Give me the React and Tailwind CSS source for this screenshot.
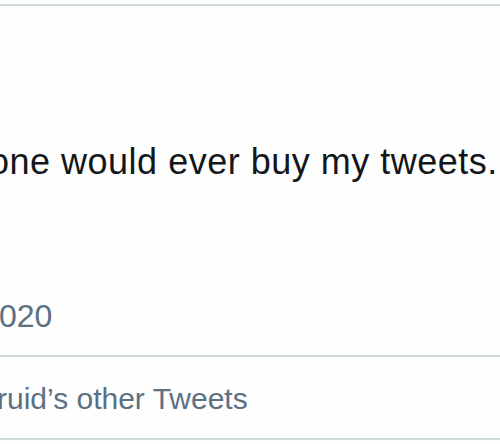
export default function App() {
  return (
    <div className="w-[500px] h-[444px] overflow-hidden bg-[#fefefe] pt-1" style={{ fontFamily: '"Liberation Sans", Arial, sans-serif' }}>
      <div className="border-t-2 border-b-2 border-[#cfd9de]">
        <div className="pt-[134px] -ml-[11px] text-[36px] leading-[44px] tracking-[0.5px] text-[#14171a] whitespace-nowrap">
          one would ever buy my tweets.
        </div>
        <div className="pt-[114px] pb-[21px] -ml-[1px] text-[32px] leading-[36px] text-[#5b7083] whitespace-nowrap">
          020
        </div>
        <div className="border-t-2 border-[#cfd9de] pt-[24px] pb-[21px] -ml-[3px] text-[30px] leading-[36px] text-[#5b7083] whitespace-nowrap">
          ruid’s other Tweets
        </div>
      </div>
    </div>
  );
}
